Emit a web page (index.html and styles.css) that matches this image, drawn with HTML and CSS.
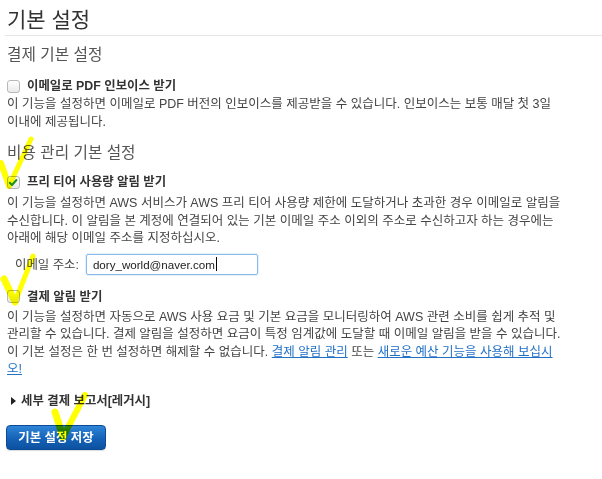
FILE: index.html
```html
<!DOCTYPE html>
<html lang="ko">
<head>
<meta charset="utf-8">
<title>기본 설정</title>
<link rel="stylesheet" href="styles.css">
</head>
<body>
<div class="page">
  <h1 class="title">기본 설정</h1>

  <h2 class="section">결제 기본 설정</h2>
  <label class="opt opt-pdf"><span class="cb"></span><span class="opt-label">이메일로 PDF 인보이스 받기</span></label>
  <p class="desc">이 기능을 설정하면 이메일로 PDF 버전의 인보이스를 제공받을 수 있습니다. 인보이스는 보통 매달 첫 3일 이내에 제공됩니다.</p>

  <h2 class="section section-cost">비용 관리 기본 설정</h2>
  <label class="opt opt-free"><span class="cb cb-checked"><svg viewBox="0 0 13 13" width="13" height="13"><path d="M3 6.8 L5.5 9.2 L10.2 3.8" fill="none" stroke="#1f8f1f" stroke-width="2.2" stroke-linecap="round" stroke-linejoin="round"/></svg></span><span class="opt-label">프리 티어 사용량 알림 받기</span></label>
  <p class="desc desc-free">이 기능을 설정하면 AWS 서비스가 AWS 프리 티어 사용량 제한에 도달하거나 초과한 경우 이메일로 알림을 수신합니다. 이 알림을 본 계정에 연결되어 있는 기본 이메일 주소 이외의 주소로 수신하고자 하는 경우에는 아래에 해당 이메일 주소를 지정하십시오.</p>

  <div class="email-row">
    <span class="email-label">이메일 주소:</span>
    <div class="email-input">dory_world@naver.com<span class="caret"></span></div>
  </div>

  <label class="opt opt-bill"><span class="cb"></span><span class="opt-label">결제 알림 받기</span></label>
  <p class="desc desc-bill">이 기능을 설정하면 자동으로 AWS 사용 요금 및 기본 요금을 모니터링하여 AWS 관련 소비를 쉽게 추적 및 관리할 수 있습니다. 결제 알림을 설정하면 요금이 특정 임계값에 도달할 때 이메일 알림을 받을 수 있습니다. 이 기본 설정은 한 번 설정하면 해제할 수 없습니다. <a href="#" class="link">결제 알림 관리</a> 또는 <a href="#" class="link">새로운 예산 기능을 사용해 보십시오!</a></p>

  <div class="details"><span class="tri"></span><span class="details-label">세부 결제 보고서[레거시]</span></div>

  <button class="save" type="button">기본 설정 저장</button>

  <svg class="marks" width="602" height="479" viewBox="0 0 602 479">
    <g fill="none" stroke="#ffff00" stroke-linecap="round" stroke-linejoin="round">
      <path d="M1 163 L9 186" stroke-width="6"/>
      <path d="M9 186 L31 139" stroke-width="5"/>
      <path d="M4 279 L15 302" stroke-width="7"/>
      <path d="M15 302 L33 256" stroke-width="5"/>
      <path d="M55 412 L63 437" stroke-width="7"/>
      <path d="M63 437 L85 395" stroke-width="6"/>
    </g>
  </svg>
</div>
</body>
</html>
```

FILE: styles.css
```css
* { box-sizing: border-box; }

html, body {
  margin: 0;
  padding: 0;
  background: #ffffff;
}

body {
  font-family: "Liberation Sans", "Noto Sans CJK KR", sans-serif;
  color: #444444;
  font-size: 12.5px;
}

.page {
  position: relative;
  width: 602px;
  height: 479px;
  padding: 8px 40px 0 7px;
  overflow: hidden;
}

.title {
  margin: 0 -40px 0 -2px;
  padding: 0 0 3px 2px;
  font-size: 21px;
  line-height: 24px;
  font-weight: normal;
  color: #333333;
  border-bottom: 1px solid #e6e6e6;
}

.section {
  margin: 9px 0 0;
  font-size: 15.7px;
  line-height: 20px;
  font-weight: normal;
  color: #555555;
}

.section-cost { margin-top: 12px; }

.opt {
  display: flex;
  align-items: center;
  gap: 7px;
  margin-top: 13px;
  line-height: 16px;
}

.opt-free { margin-top: 11px; }
.opt-bill { margin-top: 14px; }

.cb {
  display: inline-flex;
  width: 13px;
  height: 13px;
  border: 1px solid #b8b8b8;
  border-radius: 3px;
  background: linear-gradient(#ffffff, #e9e9e9);
  flex: none;
}

.cb svg { margin: -1px 0 0 -1px; }

.opt-label {
  font-weight: bold;
  color: #333333;
  font-size: 12.4px;
}

.desc {
  margin: 2px 0 0;
  line-height: 17.5px;
}

.desc-free { margin-top: 5px; }
.desc-bill { margin-top: 4px; }

.email-row {
  display: flex;
  align-items: center;
  gap: 7px;
  margin-top: 6px;
  padding-left: 8px;
}

.email-label { font-size: 12.4px; }

.email-input {
  display: flex;
  align-items: center;
  width: 172px;
  height: 21px;
  padding-left: 6px;
  border: 1px solid #86b9ea;
  border-radius: 2px;
  box-shadow: 0 0 2px #a9d0f2;
  color: #222222;
  font-size: 11.6px;
}

.caret {
  display: inline-block;
  width: 1px;
  height: 14px;
  background: #000000;
  margin-left: 1px;
}

.link {
  color: #2371c7;
  text-decoration: underline;
}

.details {
  display: flex;
  align-items: center;
  gap: 5px;
  margin-top: 14px;
  padding-left: 4px;
  line-height: 16px;
}

.tri {
  width: 0;
  height: 0;
  border-top: 4px solid transparent;
  border-bottom: 4px solid transparent;
  border-left: 5px solid #222222;
}

.details-label {
  font-weight: bold;
  color: #333333;
  font-size: 12.4px;
}

.save {
  display: block;
  margin: 16px 0 0 -1px;
  width: 100px;
  height: 25px;
  padding: 0;
  border: 1px solid #0b4a94;
  border-radius: 4px;
  background: linear-gradient(#2f85d8, #1462b8 55%, #0d519f);
  box-shadow: 0 1px 1px rgba(0,0,0,0.15);
  color: #ffffff;
  font-family: "Liberation Sans", "Noto Sans CJK KR", sans-serif;
  font-size: 12.4px;
  font-weight: bold;
}

.marks {
  position: absolute;
  left: 0;
  top: 0;
  pointer-events: none;
  mix-blend-mode: multiply;
}
```
